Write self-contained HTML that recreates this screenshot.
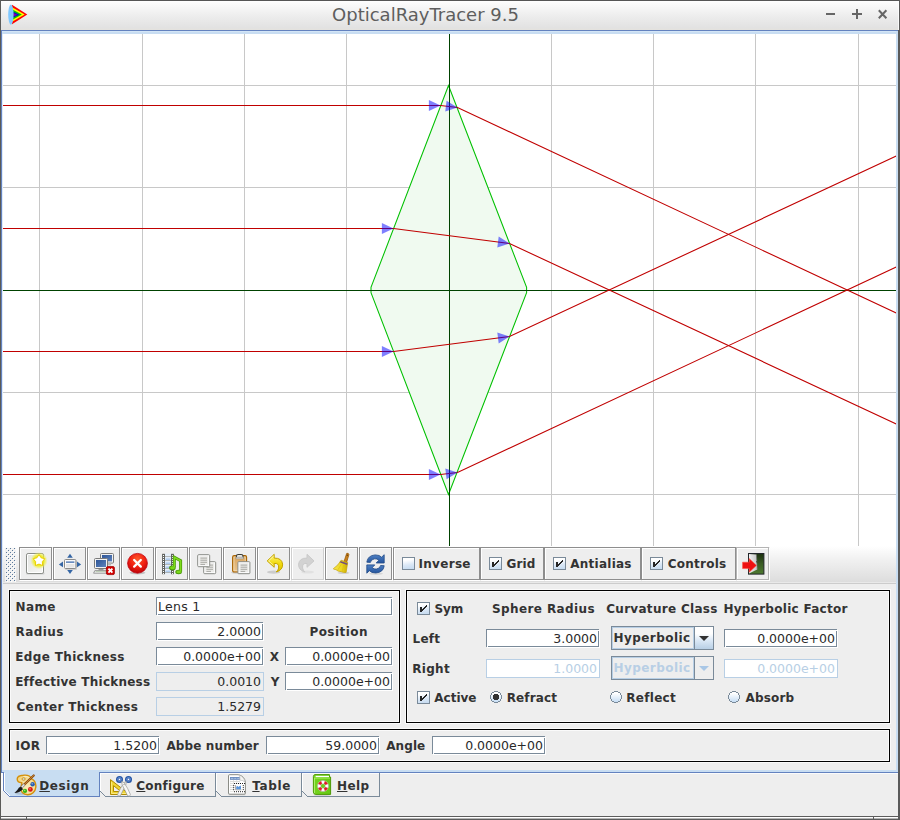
<!DOCTYPE html>
<html lang="en">
<head>
<meta charset="utf-8">
<title>OpticalRayTracer 9.5</title>
<style>
html,body{margin:0;padding:0;}
body{width:900px;height:820px;overflow:hidden;background:#eeeeee;position:relative;
 font-family:"DejaVu Sans","Liberation Sans",sans-serif;font-size:12px;color:#333;}
.abs,.abs *{position:absolute;}
div,span,svg{position:absolute;box-sizing:border-box;}
.b{font-weight:bold;font-size:12px;line-height:14px;white-space:nowrap;letter-spacing:0.22px;color:#333;}
.t{font-weight:normal;font-size:12.5px;line-height:14px;white-space:nowrap;color:#2a2a2a;}
/* window frame */
#wtop{left:0;top:0;width:900px;height:1px;background:#555;}
#wleft{left:0;top:0;width:1px;height:820px;background:#5a5a58;}
#wright{left:898px;top:30px;width:2px;height:790px;background:#5a5a5a;}
#wright2{left:899px;top:0;width:1px;height:30px;background:#5a5a5a;}
#title{left:1px;top:1px;width:898px;height:29px;background:linear-gradient(#ffffff 0,#fbfbfb 2px,#ececec 55%,#e2e2e2 92%,#e4e2dd 100%);}
#trh{left:898px;top:1px;width:1px;height:29px;background:rgba(255,255,255,.75);}
#ttext{left:0.5px;top:4px;width:850px;text-align:center;font-size:18px;line-height:22px;color:#5e5e5e;white-space:nowrap;}
#wb1{left:0;top:816px;width:900px;height:1px;background:#5c5c5c;}
#wb2{left:1px;top:817px;width:897px;height:1px;background:#ffffff;}
#wb3{left:1px;top:818px;width:897px;height:2px;background:linear-gradient(#b4b4b4 0,#b4b4b4 1px,#5c5c5c 1px);}
/* tabbed pane content border */
#tpT{left:1px;top:30px;width:897px;height:1px;background:#6382bf;}
#tpT2{left:2px;top:31px;width:896px;height:3px;background:linear-gradient(#d3e5f6 0,#d3e5f6 1px,#c8ddf2 1px);}
#tpL{left:1px;top:30px;width:1px;height:743px;background:#6382bf;}
#tpL2{left:2px;top:34px;width:1px;height:736px;background:#dfecf9;}
#tpR{left:896px;top:31px;width:2px;height:741px;background:#c8ddf2;}
#tpB2{left:2px;top:770px;width:896px;height:2px;background:#c8ddf2;}
#tpB{left:1px;top:772px;width:897px;height:1px;background:#6382bf;}
#tpB3{left:1px;top:773px;width:897px;height:1px;background:#fbfbfb;}
.cv{left:3px;top:34px;}
/* toolbar */
#tb{left:3px;top:546px;width:893px;height:36px;background:linear-gradient(#ffffff,#f0f0f0 40%,#dddddd);}
#tbl{left:3px;top:583px;width:893px;height:1px;background:#cccccc;}
#tbl0{left:3px;top:582px;width:893px;height:1px;background:#e9e9e9;}
.btn{top:547px;height:34px;background:#eeeeee;}
.btn:before{content:"";position:absolute;left:1px;top:1px;right:0;bottom:0;border:1px solid #fff;}
.btn:after{content:"";position:absolute;left:0;top:0;right:1px;bottom:1px;border:1px solid #8e8e8e;}
.btn.dis:after{border-color:#cfcfcf;}
.btn.lt:after{border-color:#b4b4b4;}
.btn svg{left:5px;top:5px;}
.cb{width:13px;height:13px;border:1px solid #7a8a99;background:linear-gradient(170deg,#ffffff 0,#ffffff 22%,#dbe8f6 60%,#c4daf0 100%);}
.cb svg{left:0;top:0;}
.rb{width:12px;height:12px;border:1px solid #7a8a99;border-radius:50%;background:linear-gradient(135deg,#ffffff 15%,#dce9f6 60%,#b8cfe5 100%);}
.rb i{left:3px;top:3px;width:4px;height:4px;background:#333;border-radius:50%;}
/* panels */
.panel{border:1px solid #000;box-shadow:0 0 0 1px #fafafa, inset 0 0 0 1px #fafafa;}
.tf{height:19px;background:#fff;border:1px solid #7a8a99;box-shadow:1px 1px 0 #fff;height:18px;}
.tf.dis{background:#eeeeee;border-color:#b8cfe5;box-shadow:none;height:19px;}
.tf.dis2{background:#fff;border-color:#b8cfe5;box-shadow:none;height:19px;}
.tf .t{right:1px;top:2px;}
.tf .t.l{right:auto;left:1px;letter-spacing:.3px;}
.tf:before{content:"";position:absolute;right:-1px;top:0;width:1px;height:1px;background:#fff;}
.tf:after{content:"";position:absolute;left:0;bottom:-1px;width:1px;height:1px;background:#fff;}
.tf.dis:before,.tf.dis:after,.tf.dis2:before,.tf.dis2:after{display:none;}
.tf.dis .t,.tf.dis2 .t{right:2px;}
.dim{color:#b8cfe5 !important;}
.combo{width:103px;height:24px;border:1px solid #7a8a99;background:#eee;}
.ci{left:0;top:0;width:82px;height:22px;border:1px solid #b8cfe5;}
.ctext{left:1.5px;top:4px;}
.carrow{left:82px;top:0;width:19px;height:22px;border-left:1px solid #7a8a99;background:linear-gradient(#ffffff 0,#ffffff 30%,#dce9f6 60%,#b8cfe5 100%);}
.cdis .carrow{background:#eee;}
.tabt u{text-decoration:underline;text-underline-offset:1px;}
</style>
</head>
<body>
<div id="title"></div>
<div id="trh"></div><div id="wtop"></div><div id="wleft"></div><div id="wright"></div><div id="wright2"></div>
<svg style="left:7px;top:3px" width="22" height="24" viewBox="7 3 22 24">
 <polygon points="12,4.8 27.3,14.5 12,24.2" fill="#ff0000"/>
 <polygon points="12.6,7.6 24.7,14.6 12.6,21.6" fill="#ffff00"/>
 <polygon points="13,9.7 21.9,14.6 13,19.600" fill="#00c000"/>
 <polygon points="13.2,11.7 19.3,14.7 13.2,17.600" fill="#0000d0"/>
 <polygon points="13.4,12.9 17.4,14.7 13.4,16.600" fill="#9000a0"/>
 <ellipse cx="10.9" cy="14.6" rx="2.7" ry="10.2" fill="#80c8ff"/>
</svg>
<div id="ttext">OpticalRayTracer 9.5</div>
<svg style="left:820px;top:5px" width="72" height="20" viewBox="820 5 72 20">
 <rect x="826" y="13" width="9" height="2" fill="#666"/>
 <rect x="852" y="13" width="10" height="2" fill="#666"/><rect x="856" y="9" width="2" height="10" fill="#666"/>
 <path d="M878.8 10.3l7.600 8M886.400 10.300l-7.600 8" stroke="#666" stroke-width="2" fill="none"/>
</svg>
<div id="tpT"></div><div id="tpT2"></div><div id="tpL"></div><div id="tpL2"></div><div id="tpR"></div>
<div id="tpB2"></div><div id="tpB"></div><div id="tpB3"></div>
<div id="wb1"></div><div id="wb2"></div><div id="wb3"></div>
<svg class="cv" width="893" height="512" viewBox="3 34 893 512">
<rect x="3" y="34" width="893" height="512" fill="#fff"/>
<rect x="39" y="34" width="1" height="512" fill="#c8c8c8"/>
<rect x="142" y="34" width="1" height="512" fill="#c8c8c8"/>
<rect x="244" y="34" width="1" height="512" fill="#c8c8c8"/>
<rect x="346" y="34" width="1" height="512" fill="#c8c8c8"/>
<rect x="551" y="34" width="1" height="512" fill="#c8c8c8"/>
<rect x="653" y="34" width="1" height="512" fill="#c8c8c8"/>
<rect x="755" y="34" width="1" height="512" fill="#c8c8c8"/>
<rect x="858" y="34" width="1" height="512" fill="#c8c8c8"/>
<rect x="3" y="85" width="893" height="1" fill="#c8c8c8"/>
<rect x="3" y="187" width="893" height="1" fill="#c8c8c8"/>
<rect x="3" y="392" width="893" height="1" fill="#c8c8c8"/>
<rect x="3" y="494" width="893" height="1" fill="#c8c8c8"/>
<polygon points="448.5,85.5 526.6,287.4 526.6,292.6 448.5,494.5 371.0,292.6 371.0,287.4" fill="#f0faf0"/>
<polygon points="448.5,85.5 526.6,287.4 526.6,292.6 448.5,494.5 371.0,292.6 371.0,287.4" fill="none" stroke="#00c000" stroke-width="1.05"/>
<rect x="449" y="34" width="1" height="512" fill="#004200"/>
<rect x="3" y="290" width="893" height="1" fill="#004200"/>
<polyline points="2,105.5 440.5,105.5 457.5,107.5 897.5,313.5" fill="none" stroke="#c00000" stroke-width="1.1"/>
<polygon points="440.5,105.5 428.9,111.0 428.9,100.0" fill="#0000ff" fill-opacity="0.5"/>
<polygon points="457.5,107.5 445.3,111.6 446.6,100.7" fill="#0000ff" fill-opacity="0.5"/>
<polyline points="2,228.5 393.5,228.5 509.5,243.5 897.5,424.5" fill="none" stroke="#c00000" stroke-width="1.1"/>
<polygon points="393.5,228.5 381.9,234.0 381.9,223.0" fill="#0000ff" fill-opacity="0.5"/>
<polygon points="509.5,243.5 497.3,247.5 498.7,236.6" fill="#0000ff" fill-opacity="0.5"/>
<polyline points="2,351.5 393.5,351.5 509.5,336.5 897.5,155.5" fill="none" stroke="#c00000" stroke-width="1.1"/>
<polygon points="393.5,351.5 381.9,357.0 381.9,346.0" fill="#0000ff" fill-opacity="0.5"/>
<polygon points="509.5,336.5 498.7,343.4 497.3,332.5" fill="#0000ff" fill-opacity="0.5"/>
<polyline points="2,474.5 440.5,474.5 457.5,472.5 897.5,266.5" fill="none" stroke="#c00000" stroke-width="1.1"/>
<polygon points="440.5,474.5 428.9,480.0 428.9,469.0" fill="#0000ff" fill-opacity="0.5"/>
<polygon points="457.5,472.5 446.6,479.3 445.3,468.4" fill="#0000ff" fill-opacity="0.5"/>
</svg><div id="tb"></div><div id="tbl0"></div><div id="tbl"></div>
<svg style="left:5px;top:548px" width="11" height="34" viewBox="0 0 11 34" shape-rendering="crispEdges"><rect width="11" height="34" fill="#f1f1f1"/><rect x="1" y="0" width="1" height="1" fill="#5c7a9c"/><rect x="2" y="1" width="1" height="1" fill="#fff"/><rect x="5" y="0" width="1" height="1" fill="#5c7a9c"/><rect x="6" y="1" width="1" height="1" fill="#fff"/><rect x="9" y="0" width="1" height="1" fill="#5c7a9c"/><rect x="10" y="1" width="1" height="1" fill="#fff"/><rect x="3" y="2" width="1" height="1" fill="#5c7a9c"/><rect x="4" y="3" width="1" height="1" fill="#fff"/><rect x="7" y="2" width="1" height="1" fill="#5c7a9c"/><rect x="8" y="3" width="1" height="1" fill="#fff"/><rect x="1" y="4" width="1" height="1" fill="#5c7a9c"/><rect x="2" y="5" width="1" height="1" fill="#fff"/><rect x="5" y="4" width="1" height="1" fill="#5c7a9c"/><rect x="6" y="5" width="1" height="1" fill="#fff"/><rect x="9" y="4" width="1" height="1" fill="#5c7a9c"/><rect x="10" y="5" width="1" height="1" fill="#fff"/><rect x="3" y="6" width="1" height="1" fill="#5c7a9c"/><rect x="4" y="7" width="1" height="1" fill="#fff"/><rect x="7" y="6" width="1" height="1" fill="#5c7a9c"/><rect x="8" y="7" width="1" height="1" fill="#fff"/><rect x="1" y="8" width="1" height="1" fill="#5c7a9c"/><rect x="2" y="9" width="1" height="1" fill="#fff"/><rect x="5" y="8" width="1" height="1" fill="#5c7a9c"/><rect x="6" y="9" width="1" height="1" fill="#fff"/><rect x="9" y="8" width="1" height="1" fill="#5c7a9c"/><rect x="10" y="9" width="1" height="1" fill="#fff"/><rect x="3" y="10" width="1" height="1" fill="#5c7a9c"/><rect x="4" y="11" width="1" height="1" fill="#fff"/><rect x="7" y="10" width="1" height="1" fill="#5c7a9c"/><rect x="8" y="11" width="1" height="1" fill="#fff"/><rect x="1" y="12" width="1" height="1" fill="#5c7a9c"/><rect x="2" y="13" width="1" height="1" fill="#fff"/><rect x="5" y="12" width="1" height="1" fill="#5c7a9c"/><rect x="6" y="13" width="1" height="1" fill="#fff"/><rect x="9" y="12" width="1" height="1" fill="#5c7a9c"/><rect x="10" y="13" width="1" height="1" fill="#fff"/><rect x="3" y="14" width="1" height="1" fill="#5c7a9c"/><rect x="4" y="15" width="1" height="1" fill="#fff"/><rect x="7" y="14" width="1" height="1" fill="#5c7a9c"/><rect x="8" y="15" width="1" height="1" fill="#fff"/><rect x="1" y="16" width="1" height="1" fill="#5c7a9c"/><rect x="2" y="17" width="1" height="1" fill="#fff"/><rect x="5" y="16" width="1" height="1" fill="#5c7a9c"/><rect x="6" y="17" width="1" height="1" fill="#fff"/><rect x="9" y="16" width="1" height="1" fill="#5c7a9c"/><rect x="10" y="17" width="1" height="1" fill="#fff"/><rect x="3" y="18" width="1" height="1" fill="#5c7a9c"/><rect x="4" y="19" width="1" height="1" fill="#fff"/><rect x="7" y="18" width="1" height="1" fill="#5c7a9c"/><rect x="8" y="19" width="1" height="1" fill="#fff"/><rect x="1" y="20" width="1" height="1" fill="#5c7a9c"/><rect x="2" y="21" width="1" height="1" fill="#fff"/><rect x="5" y="20" width="1" height="1" fill="#5c7a9c"/><rect x="6" y="21" width="1" height="1" fill="#fff"/><rect x="9" y="20" width="1" height="1" fill="#5c7a9c"/><rect x="10" y="21" width="1" height="1" fill="#fff"/><rect x="3" y="22" width="1" height="1" fill="#5c7a9c"/><rect x="4" y="23" width="1" height="1" fill="#fff"/><rect x="7" y="22" width="1" height="1" fill="#5c7a9c"/><rect x="8" y="23" width="1" height="1" fill="#fff"/><rect x="1" y="24" width="1" height="1" fill="#5c7a9c"/><rect x="2" y="25" width="1" height="1" fill="#fff"/><rect x="5" y="24" width="1" height="1" fill="#5c7a9c"/><rect x="6" y="25" width="1" height="1" fill="#fff"/><rect x="9" y="24" width="1" height="1" fill="#5c7a9c"/><rect x="10" y="25" width="1" height="1" fill="#fff"/><rect x="3" y="26" width="1" height="1" fill="#5c7a9c"/><rect x="4" y="27" width="1" height="1" fill="#fff"/><rect x="7" y="26" width="1" height="1" fill="#5c7a9c"/><rect x="8" y="27" width="1" height="1" fill="#fff"/><rect x="1" y="28" width="1" height="1" fill="#5c7a9c"/><rect x="2" y="29" width="1" height="1" fill="#fff"/><rect x="5" y="28" width="1" height="1" fill="#5c7a9c"/><rect x="6" y="29" width="1" height="1" fill="#fff"/><rect x="9" y="28" width="1" height="1" fill="#5c7a9c"/><rect x="10" y="29" width="1" height="1" fill="#fff"/><rect x="3" y="30" width="1" height="1" fill="#5c7a9c"/><rect x="4" y="31" width="1" height="1" fill="#fff"/><rect x="7" y="30" width="1" height="1" fill="#5c7a9c"/><rect x="8" y="31" width="1" height="1" fill="#fff"/><rect x="1" y="32" width="1" height="1" fill="#5c7a9c"/><rect x="2" y="33" width="1" height="1" fill="#fff"/><rect x="5" y="32" width="1" height="1" fill="#5c7a9c"/><rect x="6" y="33" width="1" height="1" fill="#fff"/><rect x="9" y="32" width="1" height="1" fill="#5c7a9c"/><rect x="10" y="33" width="1" height="1" fill="#fff"/></svg>
<div class="btn" style="left:19px;width:34px"><svg width="24" height="24" viewBox="0 0 24 24">
<defs><radialGradient id="glow"><stop offset="0" stop-color="#f4f000" stop-opacity="1"/><stop offset=".6" stop-color="#eeea20" stop-opacity=".9"/><stop offset=".8" stop-color="#eeee50" stop-opacity=".55"/><stop offset="1" stop-color="#eeee60" stop-opacity="0"/></radialGradient>
<linearGradient id="docg" x1="0" y1="0" x2="1" y2="1"><stop offset="0" stop-color="#e4e5e2"/><stop offset="1" stop-color="#f6f6f5"/></linearGradient></defs>
<rect x="2" y="20.6" width="18.6" height="1.8" rx=".9" fill="#000" opacity=".12"/>
<rect x="2.5" y="1.5" width="17" height="20" rx="1.6" fill="#fff" stroke="#8a8d88"/>
<rect x="4" y="3" width="14" height="17" fill="url(#docg)"/>
<circle cx="15" cy="8.6" r="8.6" fill="url(#glow)"/>
<polygon points="15.00,2.50 17.06,5.77 20.80,6.71 18.33,9.68 18.59,13.54 15.00,12.10 11.41,13.54 11.67,9.68 9.20,6.71 12.94,5.77" fill="#fff" stroke="#ecd000" stroke-width="1" stroke-linejoin="round"/>
</svg></div>
<div class="btn" style="left:53px;width:34px"><svg width="24" height="24" viewBox="0 0 24 24">
<rect x="7" y="8.4" width="12" height="9.6" rx="1" fill="#000" opacity=".13"/>
<rect x="6.5" y="7.5" width="11.4" height="9" rx="1" fill="#fafafa" stroke="#8a8a8a"/>
<rect x="8" y="12" width="8.400" height="3.500" fill="#e6e6e6"/>
<rect x="8" y="9.400" width="8.400" height="1.500" fill="#5a80b8"/>
<polygon points="12,1.700 14.800,5.800 9.200,5.800" fill="#3465a4"/>
<polygon points="12,21.900 14.800,17.900 9.200,17.900" fill="#3465a4"/>
<polygon points="0.900,12.400 5,9.600 5,15.200" fill="#3465a4"/>
<polygon points="23.100,12.400 19,9.600 19,15.200" fill="#3465a4"/>
</svg></div>
<div class="btn" style="left:87px;width:34px"><svg width="24" height="24" viewBox="0 0 24 24">
<defs><linearGradient id="scr" x1="0" y1="0" x2="1" y2="1"><stop offset="0" stop-color="#2e5596"/><stop offset="1" stop-color="#5c82bd"/></linearGradient></defs>
<rect x="8.5" y="1.5" width="13" height="9.6" rx="1" fill="#f2f2f2" stroke="#7a7a7a"/>
<rect x="10" y="3" width="10" height="6.4" fill="url(#scr)"/>
<rect x="14" y="11" width="5" height="2.4" fill="#b8b8b8"/>
<rect x="2.5" y="6.5" width="13" height="10" rx="1" fill="#f2f2f2" stroke="#7a7a7a"/>
<rect x="4" y="8" width="10" height="7" fill="url(#scr)"/>
<rect x="6.5" y="17" width="5" height="1.6" fill="#9a9a9a"/>
<path d="M2.8 18.6h13l1.2 2.6h-15.4z" fill="#f4f4f4" stroke="#8e8e8e" stroke-width=".9"/>
<path d="M3.6 19.6h11.6" stroke="#a8c0a0" stroke-width=".8"/>
<rect x="14.4" y="14.6" width="8" height="8" rx="1.4" fill="#d40000" stroke="#a00000" stroke-width=".8"/>
<path d="M16.4 16.6l4 4M20.4 16.6l-4 4" stroke="#fff" stroke-width="2"/>
</svg></div>
<div class="btn" style="left:121px;width:34px"><svg width="24" height="24" viewBox="0 0 24 24">
<defs><radialGradient id="redg" cx=".5" cy=".3" r=".75"><stop offset="0" stop-color="#ff5a2a"/><stop offset=".55" stop-color="#ee1c10"/><stop offset="1" stop-color="#b00008"/></radialGradient></defs>
<ellipse cx="11.5" cy="20.8" rx="8" ry="1.6" fill="#000" opacity=".18"/>
<circle cx="11.5" cy="11.3" r="9.9" fill="url(#redg)" stroke="#c0000c" stroke-width=".8"/>
<path d="M8.2 8l6.6 6.600M14.800 8l-6.600 6.600" stroke="#fff" stroke-width="2.3" stroke-linecap="round"/>
</svg></div>
<div class="btn" style="left:155px;width:34px"><svg width="24" height="24" viewBox="0 0 24 24">
<defs><linearGradient id="fr" x1="0" y1="0" x2="0" y2="1"><stop offset="0" stop-color="#ffffff"/><stop offset="1" stop-color="#9cc0ea"/></linearGradient></defs>
<rect x="5" y="1.6" width="6" height="20.8" fill="#e4eef9"/>
<rect x="5.6" y="4.6" width="4.8" height="3.2" fill="url(#fr)"/><rect x="5.6" y="8.6" width="4.8" height="3.3" fill="url(#fr)"/><rect x="5.600" y="12.7" width="4.800" height="3.300" fill="url(#fr)"/><rect x="5.600" y="16.800" width="4.800" height="3.300" fill="url(#fr)"/>
<rect x="5" y="4" width="6" height=".7" fill="#9a9c98"/><rect x="5" y="8" width="6" height=".7" fill="#9a9c98"/><rect x="5" y="12.100" width="6" height=".7" fill="#9a9c98"/><rect x="5" y="16.200" width="6" height=".7" fill="#9a9c98"/><rect x="5" y="20.200" width="6" height=".7" fill="#9a9c98"/>
<rect x="2.1" y="1.8" width="2.9" height="20.4" fill="#60625e"/><rect x="11" y="1.800" width="2.900" height="20.400" fill="#60625e"/>
<rect x="3" y="3.0" width="1" height="1" fill="#fff"/><rect x="12" y="3.0" width="1" height="1" fill="#fff"/><rect x="3" y="5.0" width="1" height="1" fill="#fff"/><rect x="12" y="5.0" width="1" height="1" fill="#fff"/><rect x="3" y="7.0" width="1" height="1" fill="#fff"/><rect x="12" y="7.0" width="1" height="1" fill="#fff"/><rect x="3" y="9.0" width="1" height="1" fill="#fff"/><rect x="12" y="9.0" width="1" height="1" fill="#fff"/><rect x="3" y="11.0" width="1" height="1" fill="#fff"/><rect x="12" y="11.0" width="1" height="1" fill="#fff"/><rect x="3" y="13.0" width="1" height="1" fill="#fff"/><rect x="12" y="13.0" width="1" height="1" fill="#fff"/><rect x="3" y="15.0" width="1" height="1" fill="#fff"/><rect x="12" y="15.0" width="1" height="1" fill="#fff"/><rect x="3" y="17.0" width="1" height="1" fill="#fff"/><rect x="12" y="17.0" width="1" height="1" fill="#fff"/><rect x="3" y="19.0" width="1" height="1" fill="#fff"/><rect x="12" y="19.0" width="1" height="1" fill="#fff"/><rect x="3" y="21.0" width="1" height="1" fill="#fff"/><rect x="12" y="21.0" width="1" height="1" fill="#fff"/>
<path d="M14.300 15.200 L14.300 5.200 L20.600 8.700 L20.600 19.400" stroke="#4a9808" stroke-width="3" fill="none" stroke-linejoin="miter"/>
<ellipse cx="12.400" cy="15.900" rx="3.300" ry="2.300" fill="#4a9808"/>
<ellipse cx="18.600" cy="20" rx="3.300" ry="2.200" fill="#4a9808"/>
<path d="M14.300 15.200 L14.300 5.300 L20.600 8.800 L20.600 19.400" stroke="#7fdc1e" stroke-width="1.500" fill="none"/>
<ellipse cx="12.500" cy="15.800" rx="2.400" ry="1.500" fill="#7ad81a"/>
<ellipse cx="18.700" cy="19.900" rx="2.400" ry="1.400" fill="#7ad81a"/>
</svg></div>
<div class="btn" style="left:189px;width:34px"><svg width="24" height="24" viewBox="0 0 24 24">
<rect x="9.7" y="9.7" width="12" height="12" rx="1" fill="#fff" stroke="#888a85"/>
<rect x="11.2" y="11.2" width="9" height="9" fill="#ecece9"/><rect x="12.4" y="12.6" width="6.6" height="1" fill="#a8a8a4"/><rect x="12.4" y="14.7" width="6.6" height="1" fill="#a8a8a4"/><rect x="12.4" y="16.8" width="6.6" height="1" fill="#a8a8a4"/><rect x="12.4" y="18.9" width="4.6" height="1" fill="#a8a8a4"/>
<rect x="3.7" y="2.7" width="12" height="12" rx="1" fill="#fff" stroke="#888a85"/>
<rect x="5.2" y="4.2" width="9" height="9" fill="#ecece9"/><rect x="6.4" y="5.6" width="6.6" height="1" fill="#a8a8a4"/><rect x="6.4" y="7.7" width="6.6" height="1" fill="#a8a8a4"/><rect x="6.4" y="9.8" width="6.6" height="1" fill="#a8a8a4"/><rect x="6.4" y="11.9" width="4.6" height="1" fill="#a8a8a4"/>
</svg></div>
<div class="btn" style="left:223px;width:34px"><svg width="24" height="24" viewBox="0 0 24 24">
<defs><linearGradient id="brd" x1="0" y1="0" x2="0" y2="1"><stop offset="0" stop-color="#d9a45c"/><stop offset="1" stop-color="#e9c48e"/></linearGradient></defs>
<ellipse cx="11" cy="20.6" rx="8" ry="1.2" fill="#000" opacity=".15"/>
<rect x="4.6" y="3.6" width="14" height="16.4" rx="1.6" fill="url(#brd)" stroke="#a86404" stroke-width="1.1"/>
<rect x="6" y="5" width="11.2" height="13.6" fill="none" stroke="#f3d9ae" stroke-width=".8"/>
<path d="M8.4 5.9 v-1.6 q0-1.8 1.8-1.8 h3 q1.8 0 1.8 1.8 v1.6z" fill="#e8e8e4" stroke="#3a3c38" stroke-width="1.1"/>
<rect x="8" y="5.2" width="7.4" height="1.6" rx=".6" fill="#f8f8f6" stroke="#8a8a86" stroke-width=".5"/>
<rect x="9.9" y="9.7" width="12" height="12" rx=".8" fill="#fff" stroke="#888a85"/>
<rect x="11.4" y="11.2" width="9" height="9" fill="#ecece9"/><rect x="12.6" y="12.6" width="6.6" height="1" fill="#a8a8a4"/><rect x="12.6" y="14.7" width="6.6" height="1" fill="#a8a8a4"/><rect x="12.6" y="16.8" width="6.6" height="1" fill="#a8a8a4"/><rect x="12.6" y="18.9" width="4.6" height="1" fill="#a8a8a4"/>
</svg></div>
<div class="btn" style="left:257px;width:34px"><svg width="24" height="24" viewBox="0 0 24 24"><g transform="translate(2.6,0.5) scale(1,1)">
<defs><linearGradient id="yg" x1="0" y1="0" x2="0" y2="1"><stop offset="0" stop-color="#fff47a"/><stop offset=".5" stop-color="#f2dc12"/><stop offset="1" stop-color="#dcc000"/></linearGradient></defs>
<ellipse cx="9" cy="19.6" rx="6.6" ry="1.7" fill="#000" opacity=".14"/>
<path d="M9.6 1.8 L2.6 8.4 L9.6 14.8 L9.6 11 Q14.6 10.2 14 15.6 Q13.6 18 11.6 19.4 Q18.4 17.6 18 11.6 Q17.2 5.4 9.6 5.6 Z" fill="url(#yg)" stroke="#c4a400" stroke-width="1" stroke-linejoin="round"/>
<path d="M9 3.6 L4 8.4 L9 12.8" fill="none" stroke="#fffbd0" stroke-width=".8" opacity=".9"/>
</g></svg></div>
<div class="btn dis" style="left:291px;width:34px"><svg width="24" height="24" viewBox="0 0 24 24"><g transform="translate(-2.4,0.5) scale(1,1)">
<ellipse cx="14" cy="19.6" rx="6.6" ry="1.5" fill="#000" opacity=".05"/>
<path d="M13.4 1.8 L20.4 8.4 L13.4 14.8 L13.4 11 Q8.4 10.2 9 15.6 Q9.4 18 11.4 19.4 Q4.600 17.6 5 11.6 Q5.8 5.4 13.4 5.600 Z" fill="#d2d2d2" stroke="#cacaca" stroke-width="1" stroke-linejoin="round"/>
</g></svg></div>
<div class="btn" style="left:325px;width:34px"><svg width="24" height="24" viewBox="0 0 24 24"><g transform="translate(1.5,0) scale(1,1)">
<defs><linearGradient id="bg1" x1="0" y1="0" x2="1" y2="0"><stop offset="0" stop-color="#f6e64c"/><stop offset=".6" stop-color="#ecd520"/><stop offset="1" stop-color="#c8a800"/></linearGradient></defs>
<ellipse cx="12" cy="20.8" rx="6" ry="1.3" fill="#000" opacity=".12"/>
<path d="M15.2 1.4 q1.8-.7 2.2 1.2 l-2.2 7.6 l-2.6-.9z" fill="#c8801c" stroke="#9c5c08" stroke-width=".8"/>
<circle cx="15.8" cy="3.3" r=".7" fill="#6a3c04"/>
<path d="M9.6 8.2 L16.2 10.6 L14.6 20.4 Q12 20.8 9.6 19.6 Q6.6 19.800 4.4 17.6 Q2.600 17.6 1.800 16.8 Q7.200 13 9.600 8.200Z" fill="url(#bg1)" stroke="#c4a000" stroke-width=".7" stroke-linejoin="round"/>
<path d="M8.800 9.800 L15.800 12.300" stroke="#75507b" stroke-width="1.700"/>
<path d="M9.800 12.300 L6.200 18.200 M12.200 13 L10.600 19.400 M14.200 13.600 L13.400 20" stroke="#d8bc10" stroke-width=".6" fill="none"/>
</g></svg></div>
<div class="btn" style="left:359px;width:34px"><svg width="24" height="24" viewBox="0 0 24 24"><g transform="translate(0,0.4) scale(1,1.04)">
<defs><linearGradient id="blg" x1="0" y1="0" x2="0" y2="1"><stop offset="0" stop-color="#4e80c4"/><stop offset="1" stop-color="#24549c"/></linearGradient></defs>
<ellipse cx="12" cy="20.400" rx="7" ry="1.300" fill="#000" opacity=".10"/>
<path d="M2.800 9.400 Q3.600 3 11.200 2.400 Q15.600 2.400 17.600 4.600 L20.200 2.200 L20.200 10.200 L12.200 10.200 L14.800 7.600 Q13.200 5.800 10.600 6.200 Q6.800 6.800 6.400 9.600 Z" fill="url(#blg)" stroke="#204a87" stroke-width=".8" stroke-linejoin="round"/>
<path d="M20.200 12.800 Q19.400 19.200 11.800 19.800 Q7.400 19.800 5.400 17.600 L2.800 20 L2.800 12 L10.800 12 L8.200 14.600 Q9.800 16.400 12.400 16 Q16.200 15.400 16.600 12.600 Z" fill="url(#blg)" stroke="#204a87" stroke-width=".8" stroke-linejoin="round"/>
</g></svg></div>
<div class="btn" style="left:393px;width:88px"><div class="cb" style="left:9px;top:10px"></div><div class="b" style="left:25.5px;top:10px;letter-spacing:0.30px">Inverse</div></div>
<div class="btn" style="left:480px;width:65px"><div class="cb" style="left:9px;top:10px"><svg width="11" height="11" viewBox="1 1 11 11" shape-rendering="crispEdges"><rect x="3" y="5" width="2" height="5" fill="#262626"/><rect x="9" y="3" width="1" height="2" fill="#262626"/><rect x="8" y="4" width="1" height="2" fill="#262626"/><rect x="7" y="5" width="1" height="2" fill="#262626"/><rect x="6" y="6" width="1" height="2" fill="#262626"/><rect x="5" y="7" width="1" height="2" fill="#262626"/></svg></div><div class="b" style="left:26.5px;top:10px;letter-spacing:0.13px">Grid</div></div>
<div class="btn" style="left:544px;width:98px"><div class="cb" style="left:9px;top:10px"><svg width="11" height="11" viewBox="1 1 11 11" shape-rendering="crispEdges"><rect x="3" y="5" width="2" height="5" fill="#262626"/><rect x="9" y="3" width="1" height="2" fill="#262626"/><rect x="8" y="4" width="1" height="2" fill="#262626"/><rect x="7" y="5" width="1" height="2" fill="#262626"/><rect x="6" y="6" width="1" height="2" fill="#262626"/><rect x="5" y="7" width="1" height="2" fill="#262626"/></svg></div><div class="b" style="left:26.2px;top:10px;letter-spacing:0.26px">Antialias</div></div>
<div class="btn" style="left:641px;width:96px"><div class="cb" style="left:9px;top:10px"><svg width="11" height="11" viewBox="1 1 11 11" shape-rendering="crispEdges"><rect x="3" y="5" width="2" height="5" fill="#262626"/><rect x="9" y="3" width="1" height="2" fill="#262626"/><rect x="8" y="4" width="1" height="2" fill="#262626"/><rect x="7" y="5" width="1" height="2" fill="#262626"/><rect x="6" y="6" width="1" height="2" fill="#262626"/><rect x="5" y="7" width="1" height="2" fill="#262626"/></svg></div><div class="b" style="left:26.7px;top:10px;letter-spacing:0.26px">Controls</div></div>
<div class="btn lt" style="left:736px;width:34px"><svg width="24" height="24" viewBox="0 0 24 24">
<defs><linearGradient id="dg" x1="0" y1="0" x2="0" y2="1"><stop offset="0" stop-color="#1c3010"/><stop offset=".5" stop-color="#3a5c24"/><stop offset="1" stop-color="#4e7a30"/></linearGradient>
<linearGradient id="dw" x1="0" y1="0" x2="1" y2="0"><stop offset="0" stop-color="#f2f2f2"/><stop offset="1" stop-color="#c4c4c4"/></linearGradient></defs>
<rect x="7.500" y="1.500" width="15.400" height="20.600" fill="url(#dg)" stroke="#22262a" stroke-width="1"/>
<path d="M8 2 L15.400 2.600 L16.200 17.400 L8 21.600Z" fill="url(#dw)"/>
<path d="M15.400 2.600 L16.200 17.400" stroke="#707070" stroke-width=".6"/>
<path d="M15.200 9.600 l1 .8" stroke="#222" stroke-width="1"/>
<path d="M1.600 10.200 L8.200 10.200 L8.200 6.600 L15.400 13.400 L8.200 20.200 L8.200 16.600 L1.600 16.600Z" fill="#ee1010" stroke="#ff4a3a" stroke-width=".6"/>
</svg></div>
<div class="panel" style="left:9px;top:590px;width:391px;height:133px"></div>
<div class="b" style="left:15.6px;top:600px;letter-spacing:0.34px;">Name</div>
<div class="b" style="left:15.6px;top:625px;letter-spacing:0.42px;">Radius</div>
<div class="b" style="left:15.2px;top:650px;letter-spacing:0.36px;">Edge Thickness</div>
<div class="b" style="left:15.2px;top:675px;letter-spacing:0.23px;">Effective Thickness</div>
<div class="b" style="left:16.4px;top:700px;letter-spacing:0.35px;">Center Thickness</div>
<div class="tf" style="left:156px;top:597px;width:236px"><span class="t l">Lens 1</span></div>
<div class="tf" style="left:156px;top:622px;width:107px"><span class="t">2.0000</span></div>
<div class="tf" style="left:156px;top:647px;width:107px"><span class="t">0.0000e+00</span></div>
<div class="tf dis" style="left:156px;top:672px;width:108px"><span class="t">0.0010</span></div>
<div class="tf dis" style="left:156px;top:697px;width:108px"><span class="t">1.5279</span></div>
<div class="b" style="left:309.4px;top:625px;letter-spacing:0.45px;">Position</div>
<div class="b" style="left:269.7px;top:650px;letter-spacing:0.20px;">X</div>
<div class="b" style="left:270.7px;top:675px;letter-spacing:0.20px;">Y</div>
<div class="tf" style="left:285px;top:647px;width:107px"><span class="t">0.0000e+00</span></div>
<div class="tf" style="left:285px;top:672px;width:107px"><span class="t">0.0000e+00</span></div>
<div class="panel" style="left:406px;top:590px;width:484px;height:133px"></div>
<div class="cb" style="left:417px;top:602px"><svg width="11" height="11" viewBox="1 1 11 11" shape-rendering="crispEdges"><rect x="3" y="5" width="2" height="5" fill="#262626"/><rect x="9" y="3" width="1" height="2" fill="#262626"/><rect x="8" y="4" width="1" height="2" fill="#262626"/><rect x="7" y="5" width="1" height="2" fill="#262626"/><rect x="6" y="6" width="1" height="2" fill="#262626"/><rect x="5" y="7" width="1" height="2" fill="#262626"/></svg></div>
<div class="b" style="left:434.4px;top:602px;letter-spacing:0.00px;">Sym</div>
<div class="b" style="left:492.0px;top:602px;letter-spacing:0.39px;">Sphere Radius</div>
<div class="b" style="left:606.2px;top:602px;letter-spacing:0.30px;">Curvature Class</div>
<div class="b" style="left:723.4px;top:602px;letter-spacing:0.29px;">Hyperbolic Factor</div>
<div class="b" style="left:412.5px;top:632px;letter-spacing:0.28px;">Left</div>
<div class="b" style="left:412.2px;top:662px;letter-spacing:0.31px;">Right</div>
<div class="tf" style="left:486px;top:629px;width:113px"><span class="t">3.0000</span></div>
<div class="tf dis2" style="left:486px;top:659px;width:114px"><span class="t dim">1.0000</span></div>
<div class="combo" style="left:611px;top:626px"><div class="ci"></div><div class="b ctext" style="left:1.4px;letter-spacing:0.45px">Hyperbolic</div><div class="carrow"><svg width="10" height="5" viewBox="0 0 10 5" style="left:4px;top:9px"><polygon points="0,0 10,0 5,5" fill="#333"/></svg></div></div>
<div class="combo cdis" style="left:611px;top:656px"><div class="ci"></div><div class="b ctext dim" style="left:1.4px;letter-spacing:0.45px">Hyperbolic</div><div class="carrow"><svg width="10" height="5" viewBox="0 0 10 5" style="left:4px;top:9px"><polygon points="0,0 10,0 5,5" fill="#a9c7e6"/></svg></div></div>
<div class="tf" style="left:724px;top:629px;width:113px"><span class="t">0.0000e+00</span></div>
<div class="tf dis2" style="left:724px;top:659px;width:114px"><span class="t dim">0.0000e+00</span></div>
<div class="cb" style="left:417px;top:691px"><svg width="11" height="11" viewBox="1 1 11 11" shape-rendering="crispEdges"><rect x="3" y="5" width="2" height="5" fill="#262626"/><rect x="9" y="3" width="1" height="2" fill="#262626"/><rect x="8" y="4" width="1" height="2" fill="#262626"/><rect x="7" y="5" width="1" height="2" fill="#262626"/><rect x="6" y="6" width="1" height="2" fill="#262626"/><rect x="5" y="7" width="1" height="2" fill="#262626"/></svg></div>
<div class="b" style="left:434.3px;top:691px;letter-spacing:0.00px;">Active</div>
<svg style="left:490px;top:691px" width="12" height="12" viewBox="0 0 12 12" shape-rendering="crispEdges"><defs><linearGradient id="rg490" x1="0" y1="0" x2="0" y2="1"><stop offset="0.15" stop-color="#fff"/><stop offset="1" stop-color="#c4dcf4"/></linearGradient></defs><circle cx="6" cy="6" r="5.3" fill="url(#rg490)" shape-rendering="auto"/><rect x="4" y="0" width="4" height="1" fill="#7a8a99"/><rect x="4" y="11" width="4" height="1" fill="#7a8a99"/><rect x="2" y="1" width="2" height="1" fill="#7a8a99"/><rect x="2" y="10" width="2" height="1" fill="#7a8a99"/><rect x="8" y="1" width="2" height="1" fill="#7a8a99"/><rect x="8" y="10" width="2" height="1" fill="#7a8a99"/><rect x="1" y="2" width="1" height="1" fill="#7a8a99"/><rect x="1" y="9" width="1" height="1" fill="#7a8a99"/><rect x="10" y="2" width="1" height="1" fill="#7a8a99"/><rect x="10" y="9" width="1" height="1" fill="#7a8a99"/><rect x="1" y="3" width="1" height="1" fill="#7a8a99"/><rect x="1" y="8" width="1" height="1" fill="#7a8a99"/><rect x="10" y="3" width="1" height="1" fill="#7a8a99"/><rect x="10" y="8" width="1" height="1" fill="#7a8a99"/><rect x="0" y="4" width="1" height="4" fill="#7a8a99"/><rect x="11" y="4" width="1" height="4" fill="#7a8a99"/><rect x="4" y="3" width="4" height="6" fill="#333"/><rect x="3" y="4" width="6" height="4" fill="#333"/></svg>
<div class="b" style="left:506.7px;top:691px;letter-spacing:0.14px;">Refract</div>
<svg style="left:610px;top:691px" width="12" height="12" viewBox="0 0 12 12" shape-rendering="crispEdges"><defs><linearGradient id="rg610" x1="0" y1="0" x2="0" y2="1"><stop offset="0.15" stop-color="#fff"/><stop offset="1" stop-color="#c4dcf4"/></linearGradient></defs><circle cx="6" cy="6" r="5.3" fill="url(#rg610)" shape-rendering="auto"/><rect x="4" y="0" width="4" height="1" fill="#7a8a99"/><rect x="4" y="11" width="4" height="1" fill="#7a8a99"/><rect x="2" y="1" width="2" height="1" fill="#7a8a99"/><rect x="2" y="10" width="2" height="1" fill="#7a8a99"/><rect x="8" y="1" width="2" height="1" fill="#7a8a99"/><rect x="8" y="10" width="2" height="1" fill="#7a8a99"/><rect x="1" y="2" width="1" height="1" fill="#7a8a99"/><rect x="1" y="9" width="1" height="1" fill="#7a8a99"/><rect x="10" y="2" width="1" height="1" fill="#7a8a99"/><rect x="10" y="9" width="1" height="1" fill="#7a8a99"/><rect x="1" y="3" width="1" height="1" fill="#7a8a99"/><rect x="1" y="8" width="1" height="1" fill="#7a8a99"/><rect x="10" y="3" width="1" height="1" fill="#7a8a99"/><rect x="10" y="8" width="1" height="1" fill="#7a8a99"/><rect x="0" y="4" width="1" height="4" fill="#7a8a99"/><rect x="11" y="4" width="1" height="4" fill="#7a8a99"/></svg>
<div class="b" style="left:626.2px;top:691px;letter-spacing:0.31px;">Reflect</div>
<svg style="left:728px;top:691px" width="12" height="12" viewBox="0 0 12 12" shape-rendering="crispEdges"><defs><linearGradient id="rg728" x1="0" y1="0" x2="0" y2="1"><stop offset="0.15" stop-color="#fff"/><stop offset="1" stop-color="#c4dcf4"/></linearGradient></defs><circle cx="6" cy="6" r="5.3" fill="url(#rg728)" shape-rendering="auto"/><rect x="4" y="0" width="4" height="1" fill="#7a8a99"/><rect x="4" y="11" width="4" height="1" fill="#7a8a99"/><rect x="2" y="1" width="2" height="1" fill="#7a8a99"/><rect x="2" y="10" width="2" height="1" fill="#7a8a99"/><rect x="8" y="1" width="2" height="1" fill="#7a8a99"/><rect x="8" y="10" width="2" height="1" fill="#7a8a99"/><rect x="1" y="2" width="1" height="1" fill="#7a8a99"/><rect x="1" y="9" width="1" height="1" fill="#7a8a99"/><rect x="10" y="2" width="1" height="1" fill="#7a8a99"/><rect x="10" y="9" width="1" height="1" fill="#7a8a99"/><rect x="1" y="3" width="1" height="1" fill="#7a8a99"/><rect x="1" y="8" width="1" height="1" fill="#7a8a99"/><rect x="10" y="3" width="1" height="1" fill="#7a8a99"/><rect x="10" y="8" width="1" height="1" fill="#7a8a99"/><rect x="0" y="4" width="1" height="4" fill="#7a8a99"/><rect x="11" y="4" width="1" height="4" fill="#7a8a99"/></svg>
<div class="b" style="left:745.5px;top:691px;letter-spacing:0.16px;">Absorb</div>
<div class="panel" style="left:9px;top:729px;width:881px;height:33px"></div>
<div class="b" style="left:15.6px;top:739px;letter-spacing:0.20px;">IOR</div>
<div class="tf" style="left:46px;top:736px;width:113px"><span class="t">1.5200</span></div>
<div class="b" style="left:166.4px;top:739px;letter-spacing:0.13px;">Abbe number</div>
<div class="tf" style="left:266px;top:736px;width:113px"><span class="t">59.0000</span></div>
<div class="b" style="left:386.2px;top:739px;letter-spacing:0.10px;">Angle</div>
<div class="tf" style="left:432px;top:736px;width:113px"><span class="t">0.0000e+00</span></div>
<svg style="left:0;top:770px" width="400" height="30" viewBox="0 770 400 30" shape-rendering="crispEdges">
 <!-- selected tab fill -->
 <polygon points="4,770 99,770 99,796 9,796 4,791" fill="#c8ddf2"/>
 <!-- white highlights -->
 <rect x="1" y="773" width="2" height="18" fill="#fdfdfd"/><rect x="1" y="791" width="1" height="25" fill="#f6f6f6"/>
 <rect x="4" y="773" width="1" height="18" fill="#fff"/>
 <path d="M5 791h1v1h1v1h1v1h1v1h1v1h-1v-1h-1v-1h-1v-1h-1v-1h-1z" fill="#fff"/>
 <!-- selected border -->
 <rect x="1" y="772" width="3" height="1" fill="#6382bf"/>
 <rect x="3" y="772" width="1" height="19" fill="#6382bf"/>
 <path d="M4 791h1v1h1v1h1v1h1v1h1v1h-1v-1h-1v-1h-1v-1h-1v-1h-1z" fill="#6382bf"/>
 <rect x="9" y="796" width="91" height="1" fill="#6382bf"/>
 <rect x="99" y="772" width="1" height="25" fill="#6382bf"/>
 <!-- unselected tabs -->
 <g fill="#fff">
  <rect x="100" y="773" width="1" height="18"/><rect x="216" y="773" width="1" height="18"/><rect x="302" y="773" width="1" height="18"/>
 </g>
 <g fill="#7a8a99">
  <path d="M100 791h1v1h1v1h1v1h1v1h1v1h-1v-1h-1v-1h-1v-1h-1v-1h-1z"/>
  <rect x="105" y="796" width="111" height="1"/><rect x="215" y="773" width="1" height="24"/>
  <path d="M216 791h1v1h1v1h1v1h1v1h1v1h-1v-1h-1v-1h-1v-1h-1v-1h-1z"/>
  <rect x="221" y="796" width="81" height="1"/><rect x="301" y="773" width="1" height="24"/>
  <path d="M302 791h1v1h1v1h1v1h1v1h1v1h-1v-1h-1v-1h-1v-1h-1v-1h-1z"/>
  <rect x="307" y="796" width="73" height="1"/><rect x="379" y="773" width="1" height="24"/>
 </g>
</svg>
<svg style="left:14px;top:774px" width="24" height="24" viewBox="0 0 24 24">
<defs><radialGradient id="pal" cx=".55" cy=".6" r=".7"><stop offset="0" stop-color="#faecb8"/><stop offset="1" stop-color="#f0d27c"/></radialGradient></defs>
<ellipse cx="9" cy="19.6" rx="8" ry="1.4" fill="#000" opacity=".12"/>
<path d="M9.400 1.200 C14.500 0.600 16.800 3 17.500 4.800 C20.400 6.200 22.200 9.400 21.800 13.200 C21.300 17.800 17.800 20.800 13.600 20.700 C9.400 20.600 6.600 17.800 6.800 14 C6.900 11.600 8 10.200 7.800 8.800 C5 8.600 3.200 7.200 3.200 5 C3.200 2.800 6 1.400 9.400 1.200 Z" fill="url(#pal)" stroke="#d4900a" stroke-width="1.400"/>
<path d="M9.400 2.400 C13.600 2 15.600 3.600 16.400 5.400" fill="none" stroke="#fff8e0" stroke-width=".8" opacity=".8"/>
<ellipse cx="9.600" cy="5" rx="1.600" ry="1.300" fill="#c8ddf2" stroke="#d4920c" stroke-width=".9"/>
<circle cx="18.600" cy="10.300" r="2.200" fill="#2c5eae"/><circle cx="18.200" cy="9.800" r=".8" fill="#86aee0"/>
<circle cx="16.400" cy="15.400" r="2.400" fill="#dc1414"/><circle cx="16" cy="14.900" r=".8" fill="#ff7a6a"/>
<circle cx="11" cy="16.900" r="2.100" fill="#34b010"/><circle cx="10.700" cy="16.400" r=".8" fill="#90e860"/>
<path d="M19.700 1.500 L9.400 11.400" stroke="#8a4a08" stroke-width="2.200" stroke-linecap="round"/>
<path d="M19.700 1.500 L9.400 11.400" stroke="#c8843c" stroke-width="1" stroke-linecap="round"/>
<path d="M10.300 10.400 L6.400 14.400" stroke="#7a7a7a" stroke-width="2.600"/>
<path d="M10.300 10.400 L6.400 14.400" stroke="#e8e8e8" stroke-width="1.400"/>
<path d="M7.300 12.700 L9 15.200 Q5.600 18.800 0.400 18.900 Q3.600 16.400 5 13.600 Z" fill="#1a1a1a"/>
</svg>
<svg style="left:109px;top:774px" width="24" height="24" viewBox="0 0 24 24">
<path d="M1.500 5.600 L1.500 20.500 L20.600 20.500 Z M4.500 11.600 L11.800 17.500 L4.500 17.500 Z" fill="#f0d430" fill-rule="evenodd" stroke="#b08c00" stroke-width="1" stroke-linejoin="round"/>
<path d="M2.600 8 L2.600 19.400 L17 19.400" fill="none" stroke="#fbf0a0" stroke-width=".8"/>
<circle cx="10.500" cy="5.400" r="3.500" fill="#2454a4"/><circle cx="19.500" cy="5.400" r="3.500" fill="#2454a4"/>
<circle cx="10.500" cy="5.400" r="1.900" fill="none" stroke="#6a94d8" stroke-width=".9"/><circle cx="19.500" cy="5.400" r="1.900" fill="none" stroke="#6a94d8" stroke-width=".9"/>
<circle cx="10.500" cy="5.400" r=".9" fill="#f4f8ff"/><circle cx="19.500" cy="5.400" r=".9" fill="#f4f8ff"/>
<path d="M17.400 7.600 L15 8.600 Q11.200 14 8.600 20.400 L9.400 22.200 L11.400 21.800 Q14.200 15.600 16.800 11 Z" fill="#eeeeec" stroke="#9a9a96" stroke-width=".7"/>
<path d="M12.600 7.600 L15 8.600 Q18.800 14 21.400 20.400 L20.600 22.200 L18.600 21.800 Q15.800 15.600 13.200 11 Z" fill="#f8f8f6" stroke="#9a9a96" stroke-width=".7"/>
<circle cx="15" cy="10.600" r=".6" fill="#888"/>
</svg>
<svg style="left:227px;top:774px" width="24" height="24" viewBox="0 0 24 24">
<path d="M1.600 20.400 L18.400 20.400" stroke="#000" stroke-width="1.600" opacity=".15"/>
<path d="M2.600 0.700 L11.600 0.700 Q17.800 2.400 18.400 8.400 L18.400 19 Q18.400 20.200 17.200 20.200 L2.600 20.200 Q1.500 20.200 1.500 19 L1.500 1.800 Q1.500 0.700 2.600 0.700 Z" fill="#fff" stroke="#8a8c86" stroke-width="1"/>
<rect x="3" y="5.400" width="10" height="12.200" fill="#dcdcd8"/>
<rect x="3.200" y="6.0" width="3" height="1" fill="#fff"/><rect x="7" y="6.0" width="2.400" height="1" fill="#fff"/><rect x="10.200" y="6.0" width="2.400" height="1" fill="#fff"/><rect x="3.200" y="8.0" width="3" height="1" fill="#fff"/><rect x="7" y="8.0" width="2.400" height="1" fill="#fff"/><rect x="10.200" y="8.0" width="2.400" height="1" fill="#fff"/><rect x="3.200" y="10.0" width="3" height="1" fill="#fff"/><rect x="7" y="10.0" width="2.400" height="1" fill="#fff"/><rect x="10.200" y="10.0" width="2.400" height="1" fill="#fff"/><rect x="3.200" y="12.0" width="3" height="1" fill="#fff"/><rect x="7" y="12.0" width="2.400" height="1" fill="#fff"/><rect x="10.200" y="12.0" width="2.400" height="1" fill="#fff"/><rect x="3.200" y="14.0" width="3" height="1" fill="#fff"/><rect x="7" y="14.0" width="2.400" height="1" fill="#fff"/><rect x="10.200" y="14.0" width="2.400" height="1" fill="#fff"/><rect x="3.200" y="16.0" width="3" height="1" fill="#fff"/><rect x="7" y="16.0" width="2.400" height="1" fill="#fff"/><rect x="10.200" y="16.0" width="2.400" height="1" fill="#fff"/>
<rect x="3" y="3" width="10.800" height="2.800" fill="#6a8cc0"/>
<rect x="3.800" y="3.900" width="2.600" height="1" fill="#a8c0e4"/><rect x="7.200" y="3.900" width="2.200" height="1" fill="#a8c0e4"/><rect x="10.200" y="3.900" width="2.400" height="1" fill="#a8c0e4"/>
<path d="M11.800 1 Q17.200 2.800 18 8 Q15.600 6 13 6.200 Q13.400 3.400 11.800 1Z" fill="#f4f4f2" stroke="#aaa" stroke-width=".5"/>
<rect x="6.700" y="9.500" width="9.600" height="8.200" fill="#fff"/>
<rect x="7.0" y="9" width="1" height="1" fill="#222"/><rect x="7.0" y="17.200" width="1" height="1" fill="#222"/><rect x="9.0" y="9" width="1" height="1" fill="#222"/><rect x="9.0" y="17.200" width="1" height="1" fill="#222"/><rect x="11.0" y="9" width="1" height="1" fill="#222"/><rect x="11.0" y="17.200" width="1" height="1" fill="#222"/><rect x="13.0" y="9" width="1" height="1" fill="#222"/><rect x="13.0" y="17.200" width="1" height="1" fill="#222"/><rect x="15.0" y="9" width="1" height="1" fill="#222"/><rect x="15.0" y="17.200" width="1" height="1" fill="#222"/><rect x="17.0" y="9" width="1" height="1" fill="#222"/><rect x="17.0" y="17.200" width="1" height="1" fill="#222"/><rect x="6.200" y="11.1" width="1" height="1" fill="#222"/><rect x="15.800" y="11.1" width="1" height="1" fill="#222"/><rect x="6.200" y="13.1" width="1" height="1" fill="#222"/><rect x="15.800" y="13.1" width="1" height="1" fill="#222"/><rect x="6.200" y="15.1" width="1" height="1" fill="#222"/><rect x="15.800" y="15.1" width="1" height="1" fill="#222"/>
<path d="M8.600 11 L8.600 15.800 L14.400 15.800" fill="none" stroke="#9a9a9a" stroke-width=".9"/>
<path d="M9.200 15.300 L9.200 13 L10.400 11.800 L11.200 13 L12.400 12 L13 12.600 L14 11 L14 15.300 Z" fill="#5a96dc"/>
</svg>
<svg style="left:312px;top:774px" width="24" height="24" viewBox="0 0 24 24">
<defs><linearGradient id="bk" x1="0" y1="0" x2="1" y2="0"><stop offset="0" stop-color="#8ae234"/><stop offset=".12" stop-color="#74d21c"/><stop offset="1" stop-color="#66c814"/></linearGradient></defs>
<ellipse cx="10" cy="20.800" rx="9" ry="1.200" fill="#000" opacity=".12"/>
<path d="M3 0.600 L17.400 0.600 L17.400 3 L18.600 3 L18.600 20.400 L3.400 20.400 Q1.400 20 1.400 18 L1.400 2.400 Q1.600 0.800 3 0.600 Z" fill="url(#bk)" stroke="#4e9a06" stroke-width="1"/>
<path d="M3.600 1.800 L17 1.800 L17 3.200 L3.600 3.200 Z" fill="#fff"/>
<path d="M2.400 4.200 L18 4.200" stroke="#a8f060" stroke-width=".8"/>
<path d="M2.500 4 L2.500 19" stroke="#b4f478" stroke-width=".8"/>
<circle cx="11" cy="12" r="5.500" fill="#fff" stroke="#b0b0b0" stroke-width=".6"/>
<path d="M15.95 13.90 A5.30 5.30 0 0 1 12.90 16.95 L11.90 14.33 A2.50 2.50 0 0 0 13.33 12.90 Z" fill="#e01c24"/><path d="M9.10 16.95 A5.30 5.30 0 0 1 6.05 13.90 L8.67 12.90 A2.50 2.50 0 0 0 10.10 14.33 Z" fill="#e01c24"/><path d="M6.05 10.10 A5.30 5.30 0 0 1 9.10 7.05 L10.10 9.67 A2.50 2.50 0 0 0 8.67 11.10 Z" fill="#e01c24"/><path d="M12.90 7.05 A5.30 5.30 0 0 1 15.95 10.10 L13.33 11.10 A2.50 2.50 0 0 0 11.90 9.67 Z" fill="#e01c24"/>
<circle cx="11" cy="12" r="2.300" fill="#70d018" stroke="#b0b0b0" stroke-width=".5"/>
</svg>

<div class="b tabt" style="left:39.3px;top:779px;letter-spacing:0.6px"><u>D</u>esign</div>
<div class="b tabt" style="left:136.3px;top:779px;letter-spacing:0.24px"><u>C</u>onfigure</div>
<div class="b tabt" style="left:252.3px;top:779px;letter-spacing:0.65px"><u>T</u>able</div>
<div class="b tabt" style="left:337.0px;top:779px;letter-spacing:0.40px"><u>H</u>elp</div>
<div id="grip" style="left:26px;top:817px;width:1px;height:3px;background:#5c5c5c"></div>
<div style="left:873px;top:817px;width:1px;height:3px;background:#5c5c5c"></div>
</body>
</html>
